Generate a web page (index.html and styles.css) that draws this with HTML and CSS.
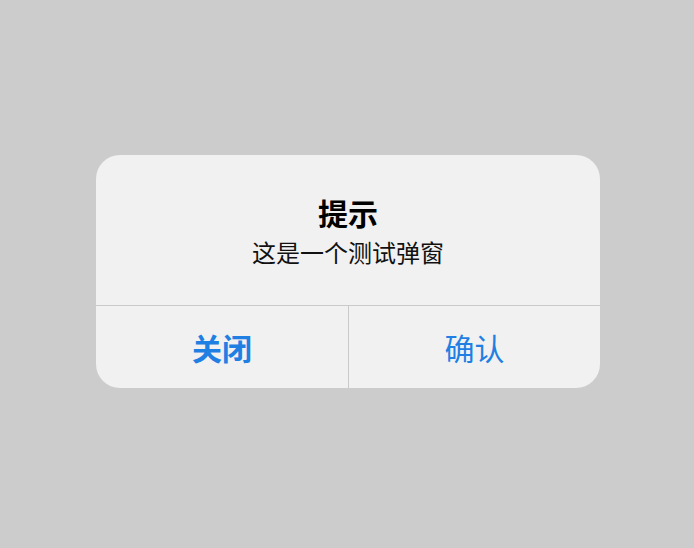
FILE: index.html
```html
<!DOCTYPE html>
<html lang="zh">
<head>
<meta charset="utf-8">
<link rel="stylesheet" href="styles.css">
</head>
<body>
<div class="dialog">
  <div class="content">
    <div class="title">提示</div>
    <div class="message">这是一个测试弹窗</div>
  </div>
  <div class="actions">
    <div class="btn btn-close">关闭</div>
    <div class="btn btn-ok">确认</div>
  </div>
</div>
</body>
</html>
```

FILE: styles.css
```css
html, body {
  margin: 0;
  padding: 0;
  height: 100%;
}
body {
  background: #cccccc;
  font-family: "Noto Sans CJK SC", "Noto Sans", sans-serif;
  display: flex;
  flex-direction: column;
  align-items: center;
  padding-top: 155px;
  padding-left: 2px;
  box-sizing: border-box;
}
.dialog {
  width: 504px;
  background: #f1f1f1;
  border-radius: 24px;
  overflow: hidden;
}
.content {
  padding: 36px 20px 36px;
  text-align: center;
  color: #000;
}
.title {
  font-size: 30px;
  line-height: 42px;
  font-weight: 700;
}
.message {
  margin-top: 2px;
  font-size: 24px;
  line-height: 34px;
  color: #111;
}
.actions {
  display: grid;
  grid-template-columns: 252px 1fr;
  border-top: 1px solid #cacaca;
}
.btn {
  height: 82px;
  display: flex;
  align-items: center;
  justify-content: center;
  font-size: 30px;
  color: #1f7fe2;
}
.btn-close {
  font-weight: 600;
}
.btn-ok {
  border-left: 1px solid #cacaca;
  font-weight: 400;
}
```
